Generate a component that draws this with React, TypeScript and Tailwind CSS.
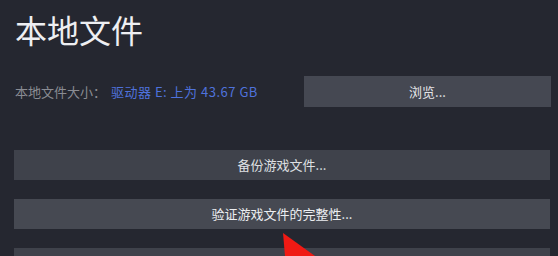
import React from "react";

export default function App() {
  const font = { fontFamily: '"Noto Sans CJK SC", "Noto Sans", sans-serif' };
  return (
    <div
      className="relative w-[558px] h-[256px] overflow-hidden bg-[#252730] text-[#e4e5e8]"
      style={font}
    >
      <div className="flex flex-col pl-[14px] pr-[7px] pt-[11px]">
        <div className="text-[32px] leading-[36px] pl-[1px] text-[#eeeff2]">本地文件</div>
        <div className="mt-[29px] flex items-center">
          <span className="pl-[1px] text-[13px] text-[#8a8c93]">本地文件大小：</span>
          <span className="ml-[5px] text-[13px] tracking-[0.5px] text-[#4f72dc]">驱动器 E: 上为 43.67 GB</span>
          <button className="ml-auto w-[247px] h-[31px] bg-[#454852] text-[13px] text-[#e4e5e8] flex items-center justify-center">
            浏览...
          </button>
        </div>
        <div className="mt-[43px] flex flex-col gap-[19px] pr-[1px]">
          <button className="w-full h-[30px] bg-[#3f424b] text-[13px] text-[#dfe0e3] flex items-center justify-center">
            备份游戏文件...
          </button>
          <button className="w-full h-[30px] bg-[#464952] text-[13px] text-[#eceef1] flex items-center justify-center">
            验证游戏文件的完整性...
          </button>
          <div className="w-full h-[30px] bg-[#3f424b]" />
        </div>
      </div>
      <svg className="absolute left-[281px] top-[231px]" width="40" height="30" viewBox="0 0 40 30">
        <polygon points="2,2 34,25 4,25" fill="#f01a14" />
      </svg>
    </div>
  );
}
